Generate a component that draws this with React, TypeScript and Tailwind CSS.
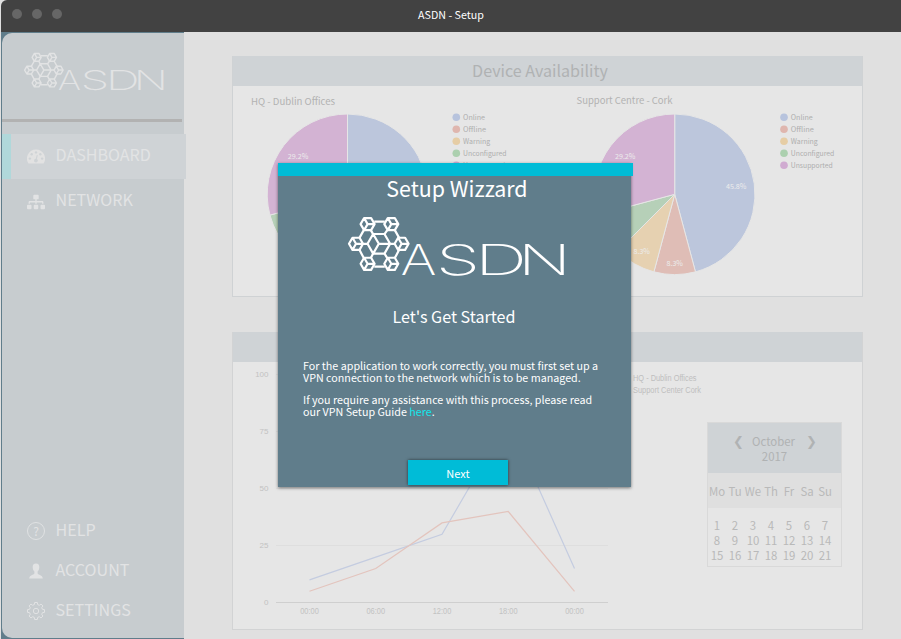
import React from "react";
import { FaSitemap } from "react-icons/fa";

const NODES: [number, number][] = [
  [19.3, 7.5],
  [43, 7.5],
  [7.7, 27.2],
  [53.3, 27.2],
  [19.3, 47.2],
  [43, 47.2],
];
const CENTER: [number, number] = [30.5, 27.2];

function vertex(cx: number, cy: number, r: number, deg: number): string {
  const a = (deg * Math.PI) / 180;
  return `${(cx + r * Math.cos(a)).toFixed(2)} ${(cy + r * Math.sin(a)).toFixed(2)}`;
}

function cube(cx: number, cy: number, r: number): string {
  const ring = [0, 60, 120, 180, 240, 300].map((d) => vertex(cx, cy, r, d)).join("L");
  const arms = [0, 120, 240].map((d) => `M${cx} ${cy}L${vertex(cx, cy, r, d)}`).join("");
  return `M${ring}Z${arms}`;
}

const LETTERS = [
  { ch: "A", x: 52.5, w: 36 },
  { ch: "S", x: 88, w: 44 },
  { ch: "D", x: 127, w: 52 },
  { ch: "N", x: 170, w: 53 },
];

function Logo({ className }: { className: string }) {
  return (
    <svg viewBox="0 0 217 60" className={className} overflow="visible">
      <g transform="translate(0.3 0.6)" fill="none" stroke="currentColor" strokeWidth="2.200" strokeLinejoin="round">
        {NODES.map(([x, y]) => (
          <path key={`${x}-${y}`} d={cube(x, y, 7)} />
        ))}
        <path d={cube(CENTER[0], CENTER[1], 11.3)} />
        <path d="M26 5H36.500M26 50H36.500M15.500 13.500L11 21.500M46.500 13.500L51 21.500M11 33L15.500 41.500M51 33L46.500 41.500M14.400 27.200H19M42 27.200H46.600M24.800 17.500L22.500 13.500M36.200 17.500L39 13.500M24.800 37L22.500 41.500M36.200 37L39 41.500" />
      </g>
      {LETTERS.map((l) => (
        <text
          key={l.ch}
          x={l.x}
          y="58.800"
          textLength={l.w}
          lengthAdjust="spacingAndGlyphs"
          className="fill-current font-[Inter,sans-serif] text-[42px] font-extralight"
        >
          {l.ch}
        </text>
      ))}
    </svg>
  );
}

function GaugeIcon() {
  return (
    <svg viewBox="0 0 18 15" className="h-[15px] w-[18px]">
      <path d="M9 .5A9 9 0 0 0 1.500 14.500H16.500A9 9 0 0 0 9 .5Z" fill="#e2e2e2" />
      <g fill="#cfd3d6">
        <circle cx="2.900" cy="9.600" r="1.200" />
        <circle cx="4.700" cy="5.200" r="1.200" />
        <circle cx="9" cy="3.400" r="1.200" />
        <circle cx="13.300" cy="5.200" r="1.200" />
        <circle cx="15.100" cy="9.600" r="1.200" />
        <circle cx="8.900" cy="11.600" r="1.900" />
      </g>
      <path d="M9 11L10.300 6.200" stroke="#cfd3d6" strokeWidth="1.100" />
    </svg>
  );
}

function HelpIcon() {
  return (
    <span className="flex h-[18px] w-[18px] items-center justify-center rounded-full border border-[#e0e2e3] text-[12px] leading-none">
      ?
    </span>
  );
}

function PersonIcon() {
  return (
    <svg viewBox="0 0 18 18" className="h-[18px] w-[18px]">
      <path
        d="M9 1.500C6.600 1.500 5.500 3 5.700 5.400C5.800 7.300 6.500 8.600 7.400 9.500V11.500C6.600 13 2.600 12.700 2.200 16.500H15.800C15.400 12.700 11.400 13 10.600 11.500V9.500C11.500 8.600 12.200 7.300 12.300 5.400C12.500 3 11.400 1.500 9 1.500Z"
        fill="currentColor"
      />
    </svg>
  );
}

const gearPath = (() => {
  const pts: string[] = [];
  for (let i = 0; i < 8; i++) {
    const base = i * 45;
    pts.push(vertex(9, 9, 6.6, base - 15), vertex(9, 9, 8.6, base - 9), vertex(9, 9, 8.6, base + 9), vertex(9, 9, 6.6, base + 15));
  }
  return `M${pts.join("L")}Z`;
})();

function GearIcon() {
  return (
    <svg viewBox="0 0 18 18" className="h-[18px] w-[18px]" fill="none" stroke="currentColor" strokeLinejoin="round">
      <path d={gearPath} />
      <circle cx="9" cy="9" r="2.700" />
    </svg>
  );
}

function NavItem({ icon, label, active, tall }: { icon: React.ReactNode; label: string; active?: boolean; tall?: boolean }) {
  return (
    <div
      className={`flex items-center text-[#e2e3e4] ${tall ? "h-[45px]" : "h-10"} ${
        active ? "w-[184px] border-l-[9px] border-[#b0d8da] bg-[#cfd3d6] pl-4" : "w-[182px] pl-[25px]"
      }`}
    >
      <span className="flex w-[18px] justify-center">{icon}</span>
      <span className="mb-1 ml-[10.500px] text-[16.100px] leading-none">{label}</span>
    </div>
  );
}

const SLICES = [
  { from: 0, to: 165, color: "#bcc6dc" },
  { from: 165, to: 195, color: "#dfbdb6" },
  { from: 195, to: 225, color: "#e6d1b1" },
  { from: 225, to: 255, color: "#b6d0b8" },
  { from: 255, to: 360, color: "#d3b3d3" },
];
const LEGEND = [
  { label: "Online", w: 22, color: "#b7c3dd" },
  { label: "Offline", w: 23, color: "#dfb6ae" },
  { label: "Warning", w: 27, color: "#e6cda5" },
  { label: "Unconfigured", w: 43.5, color: "#acd0af" },
  { label: "Unsupported", w: 42, color: "#d0abd1" },
];

function Pie({ cx, legendX, title, titleX, titleY, titleW }: { cx: number; legendX: number; title: string; titleX: number; titleY: number; titleW: number }) {
  const cy = 108.3;
  return (
    <g>
      <text x={titleX} y={titleY} textLength={titleW} lengthAdjust="spacingAndGlyphs" className="fill-[#b2b2b2] text-[9.600px]">
        {title}
      </text>
      {SLICES.map((s) => (
        <path
          key={s.from}
          d={`M${cx} ${cy}L${vertex(cx, cy, 80.3, s.from - 90)}A80.300 80.300 0 0 1 ${vertex(cx, cy, 80.3, s.to - 90)}Z`}
          fill={s.color}
          stroke="#e6e6e6"
          strokeWidth="1"
        />
      ))}
      <g className="fill-[#ececec] text-[7px]" textAnchor="middle">
        <text x={cx - 49.5} y="73" textLength="20.500" lengthAdjust="spacingAndGlyphs">29.2%</text>
        <text x={cx + 61.5} y="103" textLength="20.500" lengthAdjust="spacingAndGlyphs">45.8%</text>
        <text x={cx} y="180" textLength="16.500" lengthAdjust="spacingAndGlyphs">8.3%</text>
        <text x={cx - 33} y="168" textLength="16.500" lengthAdjust="spacingAndGlyphs">8.3%</text>
      </g>
      {LEGEND.map((l, i) => (
        <g key={l.label}>
          <circle cx={legendX} cy={31.2 + i * 12} r="3.800" fill={l.color} />
          <text x={legendX + 6.8} y={33.6 + i * 12} textLength={l.w} lengthAdjust="spacingAndGlyphs" className="fill-[#aeaeae] text-[7px]">
            {l.label}
          </text>
        </g>
      ))}
    </g>
  );
}

const TIMES = ["00:00", "06:00", "12:00", "18:00", "00:00"];
const SERIES = [
  { values: [10, 20, 30, 80, 15], color: "#c4cce0" },
  { values: [5, 15, 35, 40, 5], color: "#e3c4bd" },
];
const timeX = (i: number) => 76.5 + i * 66.25;
const valueY = (v: number) => 240.7 - v * 2.28;

function LineChart() {
  return (
    <svg width="629" height="267" className="block font-['Liberation_Sans',sans-serif]">
      {[0, 25, 50, 75, 100].map((v) => (
        <g key={v}>
          <rect x="43" y={Math.floor(valueY(v))} width="332" height="1" fill={v === 0 ? "#cfcfcf" : "#dedede"} />
          <text x="35.500" y={valueY(v) + 2.6} textAnchor="end" className="fill-[#c2c2c2] text-[8px]">
            {v}
          </text>
        </g>
      ))}
      {SERIES.map((s) => (
        <polyline key={s.color} points={s.values.map((v, i) => `${timeX(i)},${valueY(v)}`).join(" ")} fill="none" stroke={s.color} strokeWidth="1.200" />
      ))}
      {TIMES.map((t, i) => (
        <text key={i} x={timeX(i)} y="252" textAnchor="middle" textLength="18.500" lengthAdjust="spacingAndGlyphs" className="fill-[#c2c2c2] text-[8.300px]">
          {t}
        </text>
      ))}
      <text x="400" y="19" textLength="63.500" lengthAdjust="spacingAndGlyphs" className="fill-[#bebebe] text-[8.300px]">HQ - Dublin Offices</text>
      <text x="400" y="31" textLength="68" lengthAdjust="spacingAndGlyphs" className="fill-[#bebebe] text-[8.300px]">Support Center Cork</text>
    </svg>
  );
}

function Calendar() {
  return (
    <div className="absolute top-[89px] left-[474px] h-[145px] w-[135px] border border-[#d9d9d9] text-center text-[11.400px] leading-[15px] text-[#b9b9b9]">
      <div className="flex h-[50px] flex-col items-center justify-center bg-[#cfd3d6] pt-px text-[#b0b2b3]">
        <div className="flex w-full items-center justify-center gap-[11px] pr-[2px]">
          <span className="w-2 font-['DejaVu_Sans',sans-serif] text-[13px]">❮</span>
          <span className="w-[43px]">October</span>
          <span className="w-2 font-['DejaVu_Sans',sans-serif] text-[13px]">❯</span>
        </div>
        <div>2017</div>
      </div>
      <div className="grid h-[35px] grid-cols-[repeat(7,18px)] items-center bg-[#dfdfdf] pt-px">
        {["Mo", "Tu", "We", "Th", "Fr", "Sa", "Su"].map((d) => (
          <span key={d}>{d}</span>
        ))}
      </div>
      <div className="grid grid-cols-[repeat(7,18px)] pt-[10px]">
        {Array.from({ length: 21 }, (_, i) => (
          <span key={i}>{i + 1}</span>
        ))}
      </div>
    </div>
  );
}

function SetupDialog() {
  return (
    <div className="absolute top-[163px] left-[278px] flex h-[324px] w-[353px] flex-col items-center bg-[#607d8b] text-white shadow-[0_1px_3px_rgba(0,0,0,0.5)]">
      <div className="h-[13px] w-[355px] shrink-0 self-start bg-[#00bcd7]" />
      <h1 className="ml-[5px] h-[26px] text-[21.400px] leading-[24px]">Setup Wizzard</h1>
      <Logo className="mt-[14px] ml-1 h-[60px] w-[217px]" />
      <h2 className="mt-[30px] mr-px h-5 text-[16.100px] leading-5">Let's Get Started</h2>
      <div className="mt-[34px] w-full pl-[25px] text-[10.730px] leading-3 whitespace-nowrap">
        <p>
          For the application to work correctly, you must first set up a<br />
          VPN connection to the network which is to be managed.
        </p>
        <p className="mt-[10px]">
          If you require any assistance with this process, please read
          <br />
          our VPN Setup Guide <a className="text-[#12e6ea]">here</a>.
        </p>
      </div>
      <button className="mt-[42px] ml-[7px] h-[25px] w-[100px] bg-[#00bcd7] pt-px text-[11px] leading-none shadow-[0_0_3px_rgba(0,0,0,0.6)]">Next</button>
    </div>
  );
}

export default function App() {
  return (
    <div className="relative flex h-[639px] w-[901px] flex-col overflow-hidden bg-[#e0e0e0] font-['Noto_Sans_CJK_JP','Noto_Sans',sans-serif]">
      <header className="relative ml-px flex h-8 shrink-0 items-center rounded-tl-md bg-[#424242]">
        <div className="ml-[11px] flex gap-[10px] pb-1">
          <i className="h-[10px] w-[10px] rounded-full bg-[#666]" />
          <i className="h-[10px] w-[10px] rounded-full bg-[#666]" />
          <i className="h-[10px] w-[10px] rounded-full bg-[#666]" />
        </div>
        <div className="absolute inset-x-0 top-0 text-center text-[10.700px] leading-[30px] text-white">ASDN - Setup</div>
      </header>
      <div className="flex flex-1">
        <aside className="ml-px w-[183px] shrink-0 bg-[#607d8b] pt-px pb-px pl-px">
          <div className="flex h-full w-[182px] flex-col rounded-l-[10px] bg-[#c7cccf]">
            <div className="h-[86px] pt-[19px] pl-[22px] text-[#e2e3e4]">
              <Logo className="h-[39px] w-[140px]" />
            </div>
            <div className="h-[3px] w-[180px] bg-[#b2b2b2]" />
            <nav className="mt-3">
              <NavItem tall active icon={<GaugeIcon />} label="DASHBOARD" />
              <NavItem tall icon={<FaSitemap size={18} />} label="NETWORK" />
            </nav>
            <nav className="mt-auto mb-[7px]">
              <NavItem icon={<HelpIcon />} label="HELP" />
              <NavItem icon={<PersonIcon />} label="ACCOUNT" />
              <NavItem icon={<GearIcon />} label="SETTINGS" />
            </nav>
          </div>
        </aside>
        <main className="flex flex-col gap-[35px] pt-6 pl-12">
          <section className="h-[241px] w-[631px] border border-[#cfd2d4] bg-[#e6e6e6]">
            <h2 className="-mt-px h-[30px] bg-[#cfd3d6] pr-[15px] text-center text-[16.100px] leading-[29px] text-[#b0b2b3]">Device Availability</h2>
            <svg width="629" height="210" className="block">
              <Pie cx={114.5} legendX={223.3} title="HQ - Dublin Offices" titleX={18} titleY={19} titleW={84} />
              <Pie cx={441.7} legendX={551} title="Support Centre - Cork" titleX={343.5} titleY={18} titleW={96} />
            </svg>
          </section>
          <section className="relative h-[298px] w-[631px] border border-[#d2d3d4] bg-[#e6e6e6]">
            <div className="-mt-px h-[30px] bg-[#cfd3d6]" />
            <LineChart />
            <Calendar />
          </section>
        </main>
      </div>
      <SetupDialog />
    </div>
  );
}
